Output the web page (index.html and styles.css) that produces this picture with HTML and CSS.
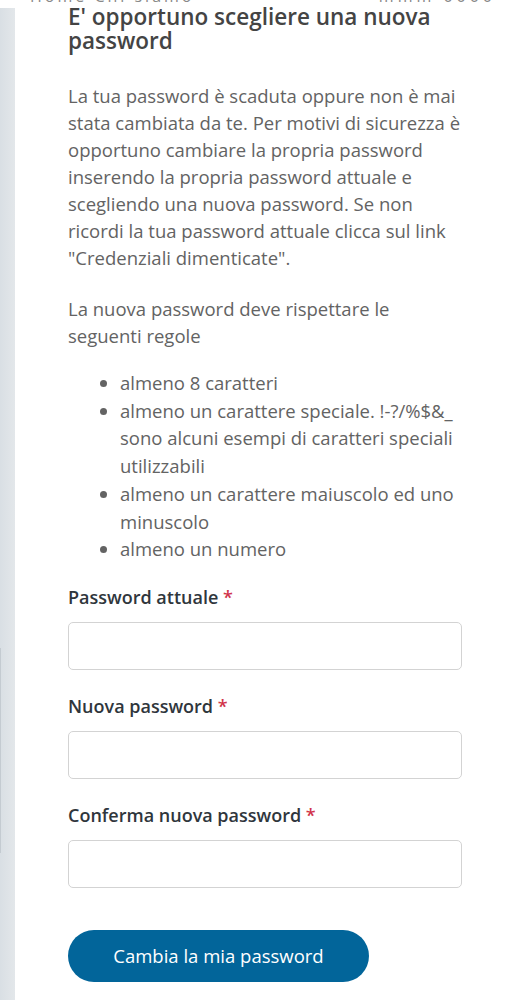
FILE: index.html
```html
<!DOCTYPE html>
<html lang="it">
<head>
<meta charset="utf-8">
<title>Cambia password</title>
<link rel="stylesheet" href="styles.css">
</head>
<body>
<div class="topclip"><span class="tc-left">Home Chi siamo</span><span class="tc-right">mmm 0000</span></div>
<div class="page">
  <aside class="strip"><div class="strip-line"></div></aside>
  <main class="content">
    <h1 class="title">E' opportuno scegliere una nuova password</h1>
    <p class="text">La tua password è scaduta oppure non è mai stata cambiata da te. Per motivi di sicurezza è opportuno cambiare la propria password inserendo la propria password attuale e scegliendo una nuova password. Se non ricordi la tua password attuale clicca sul link "Credenziali dimenticate".</p>
    <p class="text">La nuova password deve rispettare le seguenti regole</p>
    <ul class="rules">
      <li>almeno 8 caratteri</li>
      <li>almeno un carattere speciale. !-?/%$&amp;_ sono alcuni esempi di caratteri speciali utilizzabili</li>
      <li>almeno un carattere maiuscolo ed uno minuscolo</li>
      <li>almeno un numero</li>
    </ul>
    <form class="form">
      <label class="label">Password attuale <span class="req">*</span></label>
      <input class="input" type="password">
      <label class="label">Nuova password <span class="req">*</span></label>
      <input class="input" type="password">
      <label class="label">Conferma nuova password <span class="req">*</span></label>
      <input class="input" type="password">
      <button class="btn" type="button">Cambia la mia password</button>
    </form>
  </main>
</div>
</body>
</html>
```
FILE: styles.css
```css
html, body {
  margin: 0;
  padding: 0;
  background: #fff;
}
body {
  font-family: "Open Sans", "Noto Sans", sans-serif;
  width: 506px;
  height: 1000px;
  overflow: hidden;
}
.topclip {
  height: 4px;
  overflow: hidden;
  display: flex;
  justify-content: space-between;
  padding: 0 10px 0 30px;
}
.topclip span {
  font-size: 16px;
  line-height: 16px;
  margin-top: -12px;
  color: #888;
  display: block;
}
.topclip .tc-left { letter-spacing: 3px; }
.topclip .tc-right { letter-spacing: 4px; }
.page {
  display: flex;
  margin-top: 4px;
}
.strip {
  width: 15px;
  flex: none;
  background: linear-gradient(to right, #d9dfe4, #e3e7ea);
  min-height: 1000px;
  position: relative;
}
.strip-line {
  position: absolute;
  left: 0;
  top: 640px;
  width: 1px;
  height: 205px;
  background: #c4cbd1;
}
.content {
  padding-left: 53px;
  width: 394px;
}
.title {
  margin: -3px 0 0;
  font-size: 22.5px;
  line-height: 24px;
  font-weight: 600;
  color: #444;
}
.text {
  margin: 29px 0 0;
  font-size: 18.5px;
  line-height: 27px;
  color: #636363;
}
.text + .text { margin-top: 24px; }
.rules {
  margin: 20px 0 0;
  padding-left: 52px;
  font-size: 18.5px;
  line-height: 27.7px;
  color: #636363;
}
.form {
  display: flex;
  flex-direction: column;
  margin-top: 21px;
}
.label {
  font-size: 18px;
  line-height: 27px;
  font-weight: 600;
  color: #2f363c;
  margin-bottom: 11px;
}
.req { color: #d1344b; }
.input {
  box-sizing: border-box;
  height: 48px;
  width: 394px;
  border: 1px solid #d3d3d3;
  border-radius: 5px;
  background: #fff;
  margin: 0 0 23px;
}
.input:last-of-type { margin-bottom: 42px; }
.btn {
  width: 301px;
  height: 52px;
  border: none;
  border-radius: 26px;
  background: #02659a;
  color: #fff;
  font-family: "Open Sans", "Noto Sans", sans-serif;
  font-size: 18.5px;
  padding: 0;
}
```
